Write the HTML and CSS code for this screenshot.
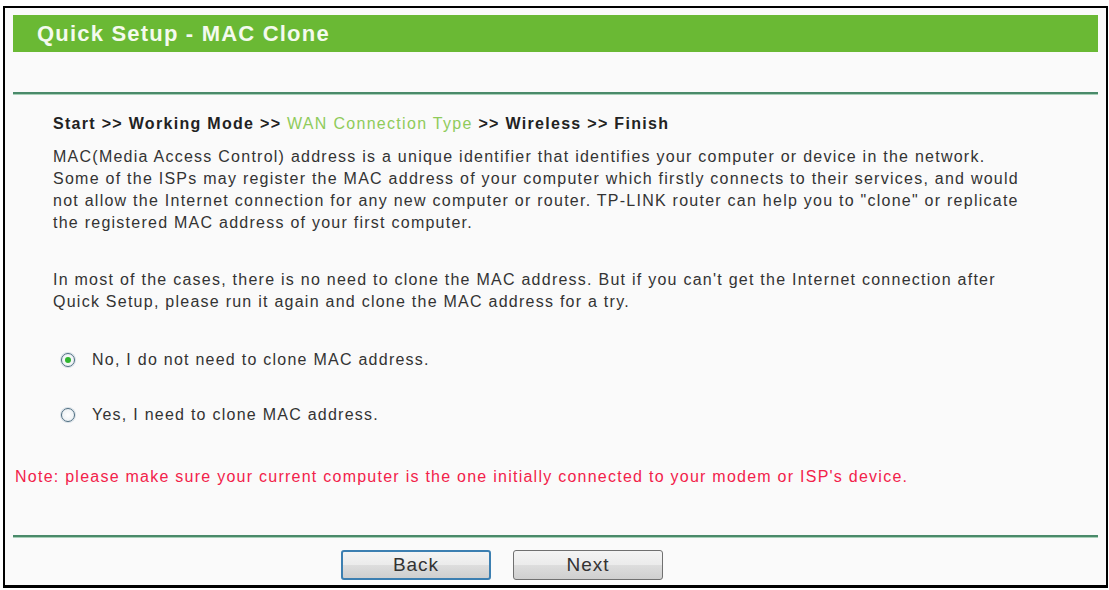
FILE: index.html
```html
<!DOCTYPE html>
<html>
<head>
<meta charset="utf-8">
<title>Quick Setup - MAC Clone</title>
<link rel="stylesheet" href="styles.css">
</head>
<body>
<div class="frame">
  <div class="header"><h1 class="title">Quick Setup - MAC Clone</h1></div>
  <div class="rule rule-top"></div>
  <div class="content">
    <p class="crumbs">Start &gt;&gt; Working Mode &gt;&gt; <span class="current">WAN Connection Type</span> &gt;&gt; Wireless &gt;&gt; Finish</p>
    <p class="desc">MAC(Media Access Control) address is a unique identifier that identifies your computer or device in the network.<br>Some of the ISPs may register the MAC address of your computer which firstly connects to their services, and would<br>not allow the Internet connection for any new computer or router. TP-LINK router can help you to "clone" or replicate<br>the registered MAC address of your first computer.</p>
    <p class="desc desc-2">In most of the cases, there is no need to clone the MAC address. But if you can't get the Internet connection after<br>Quick Setup, please run it again and clone the MAC address for a try.</p>
    <div class="opt opt-1"><span class="radio checked"></span><span class="opt-label">No, I do not need to clone MAC address.</span></div>
    <div class="opt opt-2"><span class="radio"></span><span class="opt-label">Yes, I need to clone MAC address.</span></div>
  </div>
  <p class="note">Note: please make sure your current computer is the one initially connected to your modem or ISP's device.</p>
  <div class="rule rule-bottom"></div>
  <div class="buttons">
    <button class="btn btn-focus" type="button">Back</button>
    <button class="btn" type="button">Next</button>
  </div>
</div>
</body>
</html>
```

FILE: styles.css
```css
html, body {
  margin: 0;
  padding: 0;
  background: #ffffff;
}

body {
  font-family: "Liberation Sans", Arial, sans-serif;
  font-size: 16px;
  letter-spacing: 1.25px;
  color: #333333;
}

.frame {
  box-sizing: border-box;
  margin: 6px 0 0 3px;
  width: 1105px;
  height: 582px;
  border: 2px solid #000000;
  border-bottom-width: 3px;
  background: #fafafa;
  padding: 7px 8px 0 8px;
}

.header {
  height: 37px;
  background: #6ab934;
  display: flex;
  align-items: center;
  padding-left: 24px;
}

.title {
  margin: 0;
  font-size: 22px;
  font-weight: bold;
  color: #f4faee;
  letter-spacing: 1.2px;
}

.rule {
  height: 2px;
  background: #4a8a6a;
  border-bottom: 1px solid #a8d0b8;
}

.rule-top {
  margin-top: 40px;
}

.content {
  padding-left: 40px;
}

.crumbs {
  margin: 21px 0 0 0;
  font-weight: bold;
  color: #222222;
  line-height: 16px;
  letter-spacing: 1.3px;
}

.current {
  font-weight: normal;
  color: #8fcb5a;
}

.desc {
  margin: 14px 0 0 0;
  line-height: 22px;
}

.desc-2 {
  margin-top: 35px;
}

.opt {
  display: flex;
  align-items: center;
  height: 20px;
  padding-left: 8px;
}

.opt-1 {
  margin-top: 37px;
}

.opt-2 {
  margin-top: 35px;
}

.radio {
  box-sizing: border-box;
  width: 14px;
  height: 14px;
  border-radius: 50%;
  border: 1px solid #4c6c80;
  background: radial-gradient(circle, #ffffff 0%, #e6ecf0 100%);
  display: flex;
  align-items: center;
  justify-content: center;
  margin-right: 17px;
  box-shadow: 0 0 0 1px #d8e0e6;
}

.radio.checked::after {
  content: "";
  width: 6px;
  height: 6px;
  border-radius: 50%;
  background: #2fb52f;
}

.note {
  margin: 44px 0 0 2px;
  color: #f2224a;
  line-height: 16px;
}

.rule-bottom {
  margin-top: 50px;
}

.buttons {
  display: flex;
  gap: 22px;
  margin-top: 12px;
  padding-left: 328px;
}

.btn {
  box-sizing: border-box;
  width: 150px;
  height: 30px;
  border: 1px solid #707070;
  border-radius: 3px;
  background: linear-gradient(#f4f4f4, #ebebeb 50%, #dddddd 51%, #cfcfcf);
  font-family: "Liberation Sans", Arial, sans-serif;
  font-size: 19px;
  letter-spacing: 1px;
  color: #333333;
  padding: 0;
}

.btn-focus {
  border: 2px solid #3c7fb1;
}
```
